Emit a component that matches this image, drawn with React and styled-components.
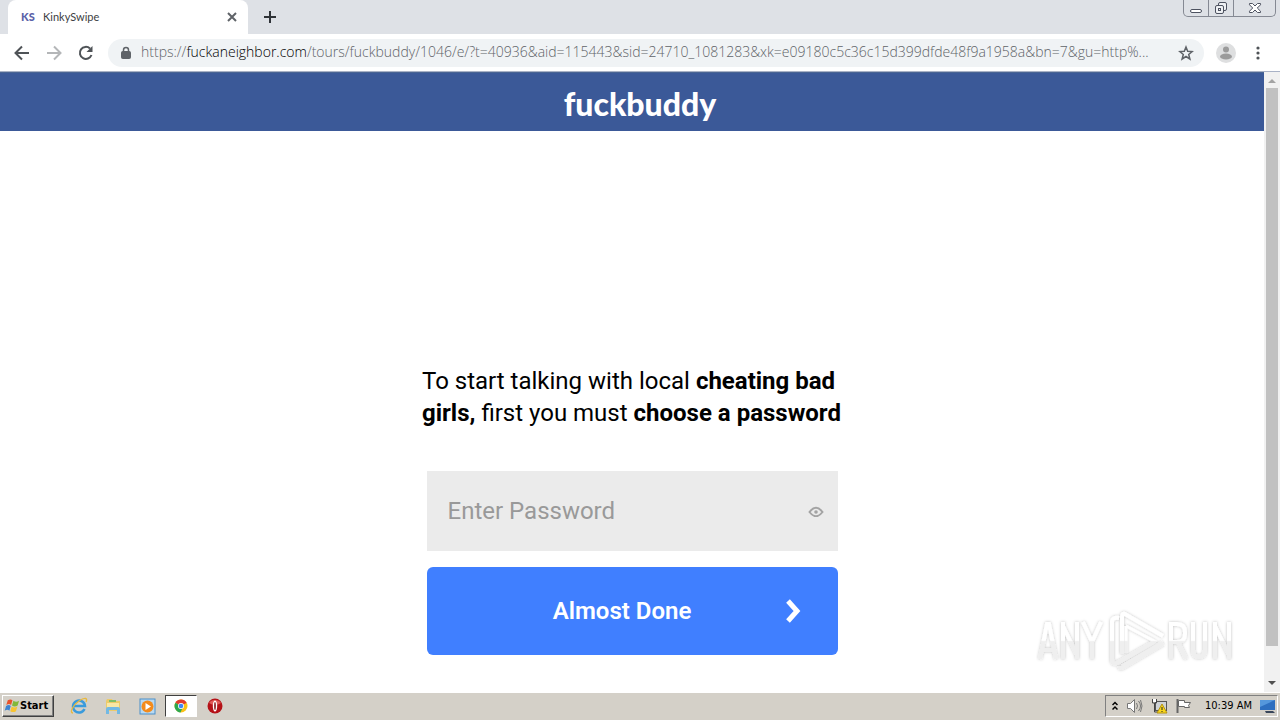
import React from "react";
import styled, { createGlobalStyle } from "styled-components";

const GlobalStyle = createGlobalStyle`
  *, *::before, *::after { box-sizing: border-box; }
  body { margin: 0; background: #fff; font-family: Roboto, "Liberation Sans", sans-serif; color: #000; }
  button { font: inherit; color: inherit; border: 0; background: none; padding: 0; }
  svg { display: block; flex: none; }
`;

const Desktop = styled.div`
  min-height: 100vh;
  display: flex;
  flex-direction: column;
`;

/* Browser chrome */
const TabStrip = styled.header`
  display: flex;
  align-items: flex-start;
  height: 34px;
  padding-left: 8px;
  background: #dee1e6;
`;
const Tab = styled.div`
  display: flex;
  align-items: center;
  width: 240px;
  height: 34px;
  padding: 0 10px 0 13px;
  background: #fff;
  border-radius: 8px 8px 0 0;
  font: 11px/16px Lato, sans-serif;
  color: #3c4043;
`;
const Favicon = styled.span`
  width: 22px;
  font: 900 11px/16px Lato, sans-serif;
  color: #5a62a8;
`;
const TabTitle = styled.span`
  flex: 1;
`;
const IconButton = styled.button`
  display: flex;
  align-items: center;
  justify-content: center;
  width: ${(p) => p.$w || 32}px;
  height: ${(p) => p.$h || 32}px;
`;
const WindowControls = styled.div`
  display: flex;
  margin-left: auto;
  margin-right: 4px;
  height: 17px;
  border: 1px solid #858993;
  border-top: 0;
  border-radius: 0 0 5px 5px;
  button + button { border-left: 1px solid #858993; }
`;
const Toolbar = styled.nav`
  display: flex;
  align-items: center;
  height: 38px;
  padding: 0 6px;
  background: #fff;
  border-bottom: 1px solid #a9b2c6;
`;
const AddressBar = styled.div`
  flex: 1;
  min-width: 0;
  display: flex;
  align-items: center;
  height: 28px;
  margin: 0 6px;
  padding: 0 2px 0 12px;
  border-radius: 14px;
  background: #f0f3f5;
`;
const Url = styled.div`
  flex: 1;
  min-width: 0;
  margin-left: 9px;
  padding-bottom: 2px;
  overflow: hidden;
  white-space: nowrap;
  font: 300 14px/20px "Open Sans", sans-serif;
  color: #5f6368;
`;
const Domain = styled.span`
  color: #000;
`;

/* Web page */
const Viewport = styled.div`
  flex: 1;
  display: flex;
`;
const Page = styled.div`
  flex: 1;
  min-width: 0;
  display: flex;
  flex-direction: column;
`;
const Brand = styled.div`
  display: flex;
  justify-content: center;
  height: 59px;
  padding: 12px 0 0 16px;
  background: #3b5998;
  border-top: 1px solid #4a6593;
  color: #fff;
  font: 900 32px/38px Lato, sans-serif;
`;
const Main = styled.main`
  flex: 1;
  display: flex;
  flex-direction: column;
  align-items: center;
  padding: 234px 16px 36px;
`;
const Prompt = styled.h1`
  width: 100%;
  max-width: 420px;
  margin: 0 0 42px;
  font: 400 24px/32px Roboto, sans-serif;
`;
const Form = styled.form`
  display: flex;
  flex-direction: column;
  gap: 16px;
  width: 100%;
  max-width: 411px;
`;
const Field = styled.label`
  display: flex;
  align-items: center;
  height: 80px;
  padding: 0 14px 0 21px;
  background: #ebebeb;
`;
const PasswordInput = styled.input`
  flex: 1;
  min-width: 0;
  padding: 0;
  border: 0;
  outline: 0;
  background: none;
  font: 400 24px/32px Roboto, sans-serif;
  &::placeholder { color: #999; opacity: 1; }
`;
const Submit = styled.button`
  display: flex;
  align-items: center;
  height: 88px;
  padding: 0 36px 0 40px;
  border-radius: 6px;
  background: #407fff;
  color: #fff;
  font: 600 24px/32px Roboto, sans-serif;
`;
const SubmitText = styled.span`
  flex: 1;
  text-align: center;
`;
const ScrollTrack = styled.div`
  display: flex;
  flex-direction: column;
  align-items: center;
  width: 16px;
  background: #f1f1f1;
`;
const ScrollThumb = styled.div`
  flex: 1;
  width: 12px;
  margin-bottom: 28px;
  background: #c1c1c1;
`;
const Watermark = styled.div`
  position: fixed;
  right: 46px;
  bottom: 46px;
  pointer-events: none;
`;

/* Taskbar */
const Taskbar = styled.footer`
  display: flex;
  align-items: center;
  height: 28px;
  padding: 0 2px;
  background: #d4d0c8;
  box-shadow: inset 0 1px #fff;
`;
const StartButton = styled.button`
  display: flex;
  align-items: center;
  width: 52px;
  height: 22px;
  padding-left: 1px;
  border: 1px solid;
  border-color: #fff #404040 #404040 #fff;
  box-shadow: inset -1px -1px #808080;
  font: 700 11px/16px "DejaVu Sans Condensed", "DejaVu Sans", sans-serif;
`;
const Launchers = styled.div`
  display: flex;
  gap: 2px;
  margin-left: 9px;
`;
const Launcher = styled.button`
  display: flex;
  align-items: center;
  justify-content: center;
  width: 32px;
  height: 22px;
  ${(p) => p.$active && "background:#fff;border:1px solid;border-color:#404040 #fff #fff #404040;"}
`;
const Tray = styled.div`
  display: flex;
  align-items: center;
  gap: 8px;
  height: 22px;
  margin-left: auto;
  padding: 0 1px 0 6px;
  border: 1px solid;
  border-color: #808080 #fff #fff #808080;
`;
const Clock = styled.time`
  margin-left: 5px;
  font: 11px/16px "DejaVu Sans Condensed", "DejaVu Sans", sans-serif;
`;

const Stroke = ({ d, size = 16, color = "#5f6368", w = 2 }) => (
  <svg width={size} height={size} viewBox={`0 0 ${size} ${size}`} fill="none" stroke={color} strokeWidth={w}>
    <path d={d} />
  </svg>
);

const WindowIcons = () => (
  <WindowControls>
    <IconButton $w={24} $h={16} aria-label="Minimize">
      <svg width="14" height="14" fill="#fff" stroke="#4d5260"><rect x="1.5" y="8.5" width="11" height="3" rx="1.5" /></svg>
    </IconButton>
    <IconButton $w={25} $h={16} aria-label="Restore">
      <svg width="14" height="14" fill="#eef0f3" stroke="#4d5260">
        <rect x="4.5" y="1.5" width="8" height="8" rx="1.5" />
        <rect x="1.5" y="4.5" width="8" height="8" rx="1.5" />
        <rect x="4.5" y="7.5" width="2" height="2" />
      </svg>
    </IconButton>
    <IconButton $w={42} $h={16} aria-label="Close window">
      <svg width="14" height="12" fill="#fff" stroke="#4d5260">
        <path d="M1.5 1.5h3L7 4l2.500-2.500h3v1.300L9.300 6l3.200 3.200v1.300h-3L7 8l-2.500 2.500h-3V9.200L4.700 6 1.500 2.800z" />
      </svg>
    </IconButton>
  </WindowControls>
);

const AnyRun = () => (
  <svg width="198" height="66" viewBox="0 0 198 66">
    <defs>
      <filter id="soft" x="-10%" y="-20%" width="120%" height="140%">
        <feDropShadow dx="0" dy="0" stdDeviation="1.500" floodColor="#000" floodOpacity=".25" />
      </filter>
      <linearGradient id="fade" x1="0" y1="0" x2="0" y2="66" gradientUnits="userSpaceOnUse">
        <stop offset=".49" stopColor="#fff" /><stop offset=".51" stopColor="#efefef" />
      </linearGradient>
    </defs>
    <g filter="url(#soft)" fill="none" stroke="url(#fade)" strokeWidth="4">
      <path d="M4 51 11 16h2l7 35M7 42h10M27 51V14M27 18l14 29M41 51V14M47 14l9 20 9-20M56 34v17" />
      <path d="M135 51V16h6q8 0 8 8v2q0 8-8 8h-6M142 34l8 17M157 14v28q0 7 6 7t6-7V14M179 51V14M179 18l14 29M193 51V14" />
      <path d="M83 10q-7-1-7 4v37q0 7 7 3l35-20" />
      <path d="M126 27 91 6q-5-3-5 3v36l40-20" strokeWidth="0" />
      <path d="M127 28 89 6q-3-1-3 3v37" />
      <path d="M90 18v27M90 18l30 16" strokeWidth="3" />
      <path d="M127 35 88 58q-4 3-4 0" strokeWidth="5" />
    </g>
  </svg>
);

const WindowsFlag = () => (
  <svg width="16" height="16" viewBox="0 0 17 16">
    <path d="M4 2q3-2 5 0L7.500 7q-2-2-5 0z" fill="#e8532b" />
    <path d="M10 2.500q3 2 6 0L14.500 7.500q-3 2-6 0z" fill="#82b83a" />
    <path d="M2.200 8q3-2 5 0L5.700 13q-2-2-5 0z" fill="#3d83d0" />
    <path d="M8.200 8.500q3 2 6 0L12.700 13.500q-3 2-6 0z" fill="#f8c431" />
  </svg>
);
const IeIcon = () => (
  <svg width="18" height="18" viewBox="0 0 18 18" fill="none">
    <path d="M14.500 12a6 6 0 1 1 .5-3H4" stroke="#3a9bdc" strokeWidth="2.500" />
    <path d="M3 16C-1 16 3 8 9 4s9-3 7 1" stroke="#e9b93c" strokeWidth="1.300" />
  </svg>
);
const FolderIcon = () => (
  <svg width="18" height="18" viewBox="0 0 18 18">
    <path d="M2 4l1-2h5l1 2h7v10H2z" fill="#eccb6a" />
    <path d="M3 6h12v7H3z" fill="#f9e7a5" /><path d="M5 3h7v2H5z" fill="#7fbf6a" />
    <path d="M2 17v-5q0-2 2-2h10q2 0 2 2v5h-3v-4H5v4z" fill="#72b9e4" />
  </svg>
);
const PlayerIcon = () => (
  <svg width="17" height="17" viewBox="0 0 17 17">
    <rect x="1" y="1" width="15" height="15" fill="#b9d9f1" stroke="#4b8fc9" />
    <circle cx="8.500" cy="8.500" r="6" fill="#f38b1c" /><path d="M6.500 5v7l5.500-3.500z" fill="#fff" />
  </svg>
);
const ChromeIcon = () => (
  <svg width="14" height="14" viewBox="0 0 14 14">
    <circle cx="7" cy="7" r="6.500" fill="#fbc116" />
    <path d="M7 7 1.400 3.700A6.500 6.500 0 0 1 12.700 3.800z" fill="#e33b2e" />
    <path d="M7 7 1.400 3.700A6.500 6.500 0 0 0 6.500 13.500L9 8z" fill="#2da94f" />
    <circle cx="7" cy="7" r="3" fill="#fff" /><circle cx="7" cy="7" r="2.300" fill="#4285f4" />
  </svg>
);
const OperaIcon = () => (
  <svg width="16" height="16" viewBox="0 0 16 16">
    <circle cx="8" cy="8" r="7.500" fill="#b51218" /><path d="M2 5a6.500 5 0 0 1 12 0q-6 4-12 0" fill="#e15a58" />
    <ellipse cx="8" cy="8" rx="2.200" ry="5.500" fill="#fff" /><ellipse cx="8" cy="8" rx=".8" ry="4" fill="#7c0b10" />
  </svg>
);

const TrayIcons = () => (
  <>
    <svg width="6" height="10" fill="none" stroke="#000" strokeWidth="1.500"><path d="M.5 4 3 1.500 5.500 4M.5 8.500 3 6l2.500 2.500" /></svg>
    <svg width="17" height="16" fill="#fff" stroke="#777">
      <path d="M1.500 5.500h3l4-4v13l-4-4h-3z" /><path d="M10.500 5q2 3 0 6M12.500 3q4 5 0 10M14.500 2q3 6 0 12" fill="none" />
    </svg>
    <svg width="17" height="16" fill="none" stroke="#555">
      <rect x="4.500" y="3.500" width="11" height="9" fill="#cfd3d6" />
      <path d="M1.500 1v4h4V1M3.500 5v9h4" stroke="#444" /><path d="M2 1h3v3H2z" fill="#fff" stroke="none" />
      <path d="M11 6l5 9H6z" fill="#f9d71c" stroke="#b59410" /><path d="M11 9v3m0 1v1" stroke="#222" />
    </svg>
    <svg width="16" height="16" fill="#fff" stroke="#666">
      <path d="M1.500 1v14" strokeWidth="2" /><path d="M2.500 2.500h6v2h6l-2 3 1 2h-5v-1h-6z" />
    </svg>
  </>
);

const up = "M0 5 4 1l4 4z";
const down = "M0 0h8L4 4z";

export default function App() {
  return (
    <Desktop>
      <GlobalStyle />
      <TabStrip>
        <Tab>
          <Favicon>KS</Favicon>
          <TabTitle>KinkySwipe</TabTitle>
          <IconButton $w={12} $h={16} aria-label="Close tab"><Stroke size={10} d="M1 1l8 8M9 1 1 9" /></IconButton>
        </Tab>
        <IconButton $w={44} $h={34} aria-label="New tab"><Stroke size={12} color="#2f3338" d="M6 0v12M0 6h12" /></IconButton>
        <WindowIcons />
      </TabStrip>
      <Toolbar>
        <IconButton aria-label="Back"><Stroke color="#4f5357" d="M15 8H2M8 1.500 1.500 8 8 14.500" /></IconButton>
        <IconButton aria-label="Forward"><Stroke color="#b4b6b8" d="M1 8h13M8 1.500 14.500 8 8 14.500" /></IconButton>
        <IconButton aria-label="Reload">
          <svg width="16" height="16" fill="none" stroke="#4f5357" strokeWidth="2">
            <path d="M13.500 10A6 6 0 1 1 12 3.500" /><path d="M14.500 1v6h-6z" fill="#4f5357" stroke="none" />
          </svg>
        </IconButton>
        <AddressBar>
          <svg width="12" height="14" fill="none" stroke="#5f6368">
            <path d="M3.500 6V4a2.500 2.500 0 0 1 5 0v2" strokeWidth="1.500" /><rect x="1.500" y="5.500" width="9" height="7" rx="1" fill="#5f6368" />
          </svg>
          <Url role="textbox" aria-label="Address" tabIndex={0}>
            https://<Domain>fuckaneighbor.com</Domain>/tours/fuckbuddy/1046/e/?t=40936&amp;aid=115443&amp;sid=24710_1081283&amp;xk=e09180c5c36c15d399dfde48f9a1958a&amp;bn=7&amp;gu=http%...
          </Url>
          <IconButton aria-label="Bookmark">
            <svg width="16" height="16" fill="none" stroke="#5f6368" strokeWidth="1.500">
              <path d="M8 2l1.700 4.300 4.500.3-3.500 2.900 1.200 4.500L8 11.500 4.100 14l1.200-4.500L1.800 6.600l4.500-.3z" />
            </svg>
          </IconButton>
        </AddressBar>
        <IconButton aria-label="Profile">
          <svg width="20" height="20"><circle cx="10" cy="10" r="10" fill="#dedfe0" /><circle cx="10" cy="6.500" r="3" fill="#9b9b9b" /><ellipse cx="10" cy="13.500" rx="6" ry="3" fill="#9b9b9b" /></svg>
        </IconButton>
        <IconButton aria-label="Menu">
          <svg width="4" height="14" fill="#4f5357"><circle cx="2" cy="2" r="1.600" /><circle cx="2" cy="7" r="1.600" /><circle cx="2" cy="12" r="1.600" /></svg>
        </IconButton>
      </Toolbar>
      <Viewport>
        <Page>
          <Brand>fuckbuddy</Brand>
          <Main>
            <Prompt>To start talking with local <b>cheating bad girls,</b> first you must <b>choose a password</b></Prompt>
            <Form onSubmit={(e) => e.preventDefault()}>
              <Field>
                <PasswordInput type="password" placeholder="Enter Password" aria-label="Enter Password" />
                <IconButton type="button" $w={16} $h={16} aria-label="Show password">
                  <svg width="16" height="12" viewBox="0 0 16 12" fill="none" stroke="#a3a3a3" strokeWidth="2">
                    <path d="M1.500 7q6.500-8.500 13 0-6.500 8.500-13 0z" /><circle cx="8" cy="7" r="1.800" fill="#a3a3a3" stroke="none" />
                  </svg>
                </IconButton>
              </Field>
              <Submit type="submit">
                <SubmitText>Almost Done</SubmitText>
                <Stroke size={24} w={5} color="#fff" d="M10 2l9 10-9 10" />
              </Submit>
            </Form>
          </Main>
        </Page>
        <ScrollTrack>
          <IconButton $w={16} $h={16} aria-label="Scroll up"><svg width="8" height="5" fill="#a3a3a3"><path d={up} /></svg></IconButton>
          <ScrollThumb />
          <IconButton $w={16} $h={18} aria-label="Scroll down"><svg width="8" height="5" fill="#505050"><path d={down} /></svg></IconButton>
        </ScrollTrack>
      </Viewport>
      <Watermark role="img" aria-label="Watermark"><AnyRun /></Watermark>
      <Taskbar>
        <StartButton><WindowsFlag />Start</StartButton>
        <Launchers>
          <Launcher aria-label="Internet Explorer"><IeIcon /></Launcher>
          <Launcher aria-label="Explorer"><FolderIcon /></Launcher>
          <Launcher aria-label="Media Player"><PlayerIcon /></Launcher>
          <Launcher $active aria-label="Chrome"><ChromeIcon /></Launcher>
          <Launcher aria-label="Opera"><OperaIcon /></Launcher>
        </Launchers>
        <Tray>
          <TrayIcons />
          <Clock>10:39 AM</Clock>
          <svg width="16" height="16"><path d="M0 2h15v10H0z" fill="#2e6fc0" /><path d="M0 2h15L0 9z" fill="#5597dc" /><path d="M5 13h8l2 2H6z" fill="#39465a" /></svg>
        </Tray>
      </Taskbar>
    </Desktop>
  );
}
